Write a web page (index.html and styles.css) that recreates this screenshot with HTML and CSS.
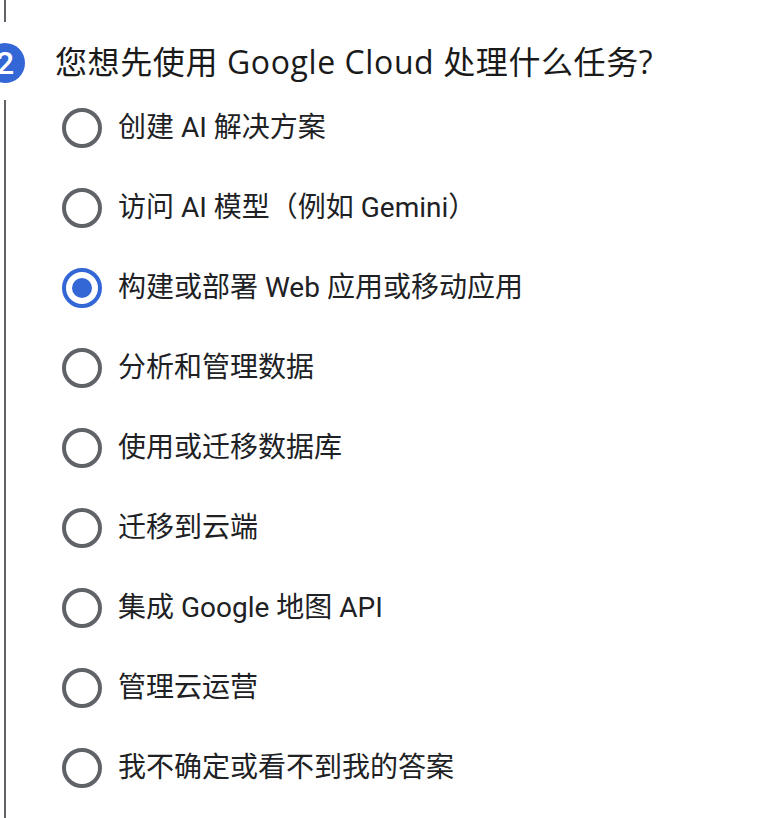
FILE: index.html
```html
<!DOCTYPE html>
<html lang="zh-CN">
<head>
<meta charset="utf-8">
<title>Google Cloud</title>
<link rel="stylesheet" href="styles.css">
</head>
<body>
<section class="step">
  <div class="rail">
    <div class="rail-line rail-top"></div>
    <div class="badge">2</div>
    <div class="rail-line rail-bottom"></div>
  </div>
  <div class="content">
    <h2 class="question">您想先使用 Google Cloud 处理什么任务?</h2>
    <ul class="options">
      <li class="option"><input class="radio" type="radio" name="task"><span class="label">创建 AI 解决方案</span></li>
      <li class="option"><input class="radio" type="radio" name="task"><span class="label">访问 AI 模型（例如 Gemini）</span></li>
      <li class="option"><input class="radio" type="radio" name="task" checked><span class="label">构建或部署 Web 应用或移动应用</span></li>
      <li class="option"><input class="radio" type="radio" name="task"><span class="label">分析和管理数据</span></li>
      <li class="option"><input class="radio" type="radio" name="task"><span class="label">使用或迁移数据库</span></li>
      <li class="option"><input class="radio" type="radio" name="task"><span class="label">迁移到云端</span></li>
      <li class="option"><input class="radio" type="radio" name="task"><span class="label">集成 Google 地图 API</span></li>
      <li class="option"><input class="radio" type="radio" name="task"><span class="label">管理云运营</span></li>
      <li class="option"><input class="radio" type="radio" name="task"><span class="label">我不确定或看不到我的答案</span></li>
    </ul>
  </div>
</section>
</body>
</html>
```
FILE: styles.css
```css
html, body {
  margin: 0;
  padding: 0;
  background: #ffffff;
  height: 100%;
  overflow: hidden;
}
body {
  font-family: Roboto, "Noto Sans CJK SC", sans-serif;
  color: #202124;
}
.step {
  display: flex;
  min-height: 818px;
}
.rail {
  width: 40px;
  margin-left: -15px;
  display: flex;
  flex-direction: column;
  align-items: center;
  flex-shrink: 0;
}
.rail-line {
  width: 2px;
  background: #5f6368;
}
.rail-top {
  height: 22px;
  margin-bottom: 21px;
}
.rail-bottom {
  flex: 1;
  margin-top: 17px;
  margin-left: -1px;
}
.badge {
  width: 40px;
  height: 40px;
  border-radius: 50%;
  background: #3367d6;
  color: #ffffff;
  font-size: 32px;
  font-weight: 500;
  line-height: 40px;
  text-align: center;
  font-family: Roboto, sans-serif;
}
.content {
  margin-left: 30px;
  flex: 1;
}
.question {
  margin: 42px 0 6px;
  font-family: "Open Sans", "Noto Sans CJK SC", sans-serif;
  font-size: 32px;
  line-height: 40px;
  font-weight: 400;
  letter-spacing: 0.6px;
  color: #1a1a1a;
}
.options {
  list-style: none;
  margin: 0;
  padding: 0 0 0 7px;
}
.option {
  display: flex;
  align-items: center;
  height: 80px;
  gap: 16px;
}
.radio {
  appearance: none;
  -webkit-appearance: none;
  margin: 0;
  width: 40px;
  height: 40px;
  box-sizing: border-box;
  border: 4px solid #5f6368;
  border-radius: 50%;
  display: flex;
  align-items: center;
  justify-content: center;
  flex-shrink: 0;
}
.radio:checked {
  border-color: #3367d6;
}
.radio:checked::after {
  content: "";
  width: 20px;
  height: 20px;
  border-radius: 50%;
  background: #3367d6;
}
.label {
  font-size: 28px;
  line-height: 40px;
}
```
